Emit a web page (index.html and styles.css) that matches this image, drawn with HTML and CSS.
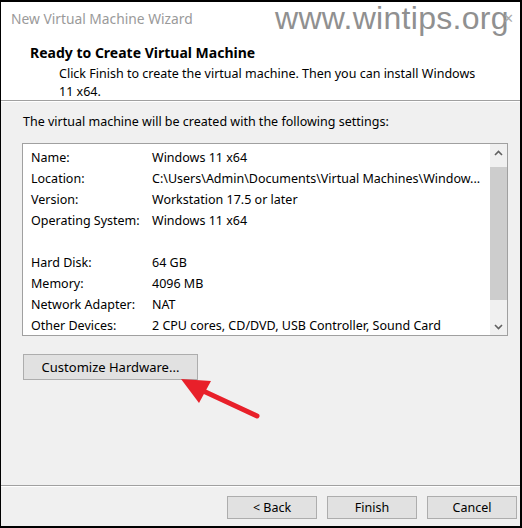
FILE: index.html
```html
<!DOCTYPE html>
<html lang="en">
<head>
    <meta charset="UTF-8">
    <title>New Virtual Machine Wizard</title>
    <link rel="stylesheet" href="styles.css">
</head>
<body>
    <div class="window">
        <div class="header">
            <div class="titlebar">
                <span class="title">New Virtual Machine Wizard</span>
                <span class="close">&#x2715;</span>
            </div>
            <div class="watermark">www.wintips.org</div>
            <h1 class="heading">Ready to Create Virtual Machine</h1>
            <p class="desc">Click Finish to create the virtual machine. Then you can install Windows 11 x64.</p>
        </div>

        <div class="body">
            <p class="intro">The virtual machine will be created with the following settings:</p>

            <div class="listbox">
                <div class="rows">
                    <div class="row"><span class="label">Name:</span><span>Windows 11 x64</span></div>
                    <div class="row"><span class="label">Location:</span><span>C:\Users\Admin\Documents\Virtual Machines\Window...</span></div>
                    <div class="row"><span class="label">Version:</span><span>Workstation 17.5 or later</span></div>
                    <div class="row"><span class="label">Operating System:</span><span>Windows 11 x64</span></div>
                    <div class="row"></div>
                    <div class="row"><span class="label">Hard Disk:</span><span>64 GB</span></div>
                    <div class="row"><span class="label">Memory:</span><span>4096 MB</span></div>
                    <div class="row"><span class="label">Network Adapter:</span><span>NAT</span></div>
                    <div class="row"><span class="label">Other Devices:</span><span>2 CPU cores, CD/DVD, USB Controller, Sound Card</span></div>
                </div>
                <div class="scrollbar">
                    <div class="scroll-btn">
                        <svg width="9" height="6" viewBox="0 0 9 6"><path d="M1 5 L4.5 1.5 L8 5" fill="none" stroke="#606060" stroke-width="1.6"/></svg>
                    </div>
                    <div class="track"><div class="thumb"></div></div>
                    <div class="scroll-btn">
                        <svg width="9" height="6" viewBox="0 0 9 6"><path d="M1 1 L4.5 4.5 L8 1" fill="none" stroke="#606060" stroke-width="1.6"/></svg>
                    </div>
                </div>
            </div>

            <div class="custom-wrap">
                <button class="btn btn-custom">Customize Hardware...</button>
                <svg class="arrow" width="105" height="55" viewBox="0 0 105 55">
                    <line x1="98" y1="47" x2="40" y2="20" stroke="#e8202a" stroke-width="5" stroke-linecap="round"/>
                    <polygon points="22,10 52,12 40,34" fill="#e8202a"/>
                </svg>
            </div>
        </div>

        <div class="footer">
            <button class="btn">&lt; Back</button>
            <button class="btn">Finish</button>
            <button class="btn">Cancel</button>
        </div>
    </div>
</body>
</html>
```

FILE: styles.css
```css
* {
    margin: 0;
    padding: 0;
    box-sizing: border-box;
}

body {
    font-family: "Noto Sans", "Open Sans", sans-serif;
    font-size: 12.5px;
    color: #000;
    background: #000;
}

.window {
    width: 522px;
    height: 528px;
    border-top: 2px solid #000;
    border-left: 1px solid #000;
    border-right: 2px solid #000;
    border-bottom: 2px solid #000;
    background: #f0f0f0;
    display: flex;
    flex-direction: column;
}

.header {
    position: relative;
    flex-shrink: 0;
    background: #fff;
    height: 99px;
    border-bottom: 1px solid #a0a0a0;
    box-shadow: 0 1px 0 #fff;
}

.titlebar {
    display: flex;
    justify-content: space-between;
    align-items: center;
    height: 32px;
    padding: 0 6px 0 10px;
}

.title {
    color: #9a9a9a;
    font-size: 13.8px;
}

.close {
    position: relative;
    z-index: 1;
    color: #aaa;
    font-size: 13px;
}

.watermark {
    position: absolute;
    top: -2px;
    left: 274px;
    font-family: "Liberation Sans", Arial, sans-serif;
    font-size: 32px;
    color: #909090;
    letter-spacing: 0.3px;
}

.heading {
    font-size: 14px;
    font-weight: bold;
    padding-left: 29px;
    margin-top: 9px;
}

.desc {
    padding-left: 58px;
    padding-right: 28px;
    line-height: 18px;
    margin-top: 3px;
}

.body {
    flex: 1;
    padding: 12px 12px 0 21px;
}

.intro {
    margin-left: 1px;
}

.listbox {
    display: flex;
    margin-top: 13px;
    height: 193px;
    border: 1px solid #a0a0a0;
    background: #fff;
}

.rows {
    flex: 1;
    padding: 3px 8px 0 8px;
}

.row {
    display: flex;
    height: 21px;
    align-items: center;
}

.label {
    width: 121px;
    flex-shrink: 0;
}

.scrollbar {
    width: 17px;
    display: flex;
    flex-direction: column;
    background: #f0f0f0;
}

.scroll-btn {
    height: 17px;
    display: flex;
    align-items: center;
    justify-content: center;
}

.track {
    flex: 1;
    padding: 6px 0 18px;
}

.thumb {
    height: 100%;
    background: #cdcdcd;
}

.custom-wrap {
    position: relative;
    margin-top: 18px;
}

.btn {
    font-family: inherit;
    font-size: 12.5px;
    background: #e1e1e1;
    border: 1px solid #adadad;
    color: #000;
    width: 90px;
    height: 23px;
}

.btn-custom {
    width: 175px;
    height: 26px;
    margin-left: 1px;
    font-size: 13px;
}

.arrow {
    position: absolute;
    left: 137px;
    top: 15px;
}

.footer {
    flex-shrink: 0;
    height: 41px;
    border-top: 1px solid #a0a0a0;
    box-shadow: inset 0 1px 0 #fff;
    display: flex;
    justify-content: flex-end;
    align-items: flex-start;
    gap: 10px;
    padding: 10px 3px 0 0;
}
```
